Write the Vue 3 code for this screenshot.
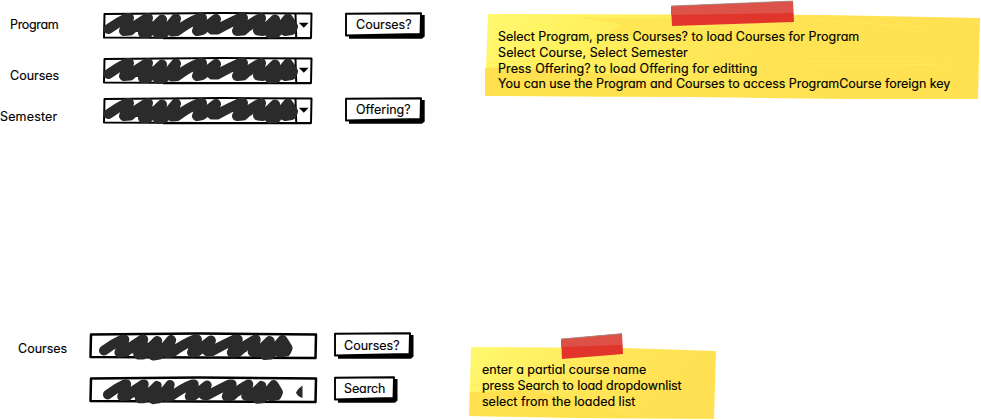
<script setup>
const selectors = [
  { label: 'Program', button: 'Courses?', key: 'program' },
  { label: 'Courses', button: '', key: 'course' },
  { label: 'Semester', button: 'Offering?', key: 'semester' },
]
const loadingNotes = [
  { text: 'Select Program, press Courses? to load Courses for Program', pace: 'even' },
  { text: 'Select Course, Select Semester', pace: 'loose' },
  { text: 'Press Offering? to load Offering for editting', pace: 'loose' },
  { text: 'You can use the Program and Courses to access ProgramCourse foreign key', pace: 'tight' },
]
const searchNotes = [
  { text: 'enter a partial course name', pace: 'even' },
  { text: 'press Search to load dropdownlist', pace: 'snug' },
  { text: 'select from the loaded list', pace: 'even' },
]
const scribble =
  'M5.5 17 Q15 10 24 6 L26 6 L21 19 L27 18.5 Q35 11 44 6 L45 6 L40 21 L45 21 L59 7.5 L55 22 L61 21 L73 6.5 L69 19.5 L74 19 Q86 10 97 6 L99 6 L94 19 L99 18 L113 7 L109 17.5 L114 17.5 Q126 11 137 6 L140 6 L134 19 L140 18.5 Q149 10 158 6 L155 18.5 L160 19 L172 7.5 L167 21.5 L173 21 L185 6.5 L182 19 L188.5 18 L190 14.5 L186 8 M43 18 L60 17 L72 17 M48 14 L58 15 L70 14 M25 12 L34 15 M158 15 L186 14 M97 12 L107 14 M137 12 L146 14'
</script>

<template>
  <main class="page">
    <section class="top">
      <div class="form">
        <div v-for="row in selectors" :key="row.key" class="row" :class="row.key">
          <label class="label">{{ row.label }}</label>
          <div class="combo">
            <svg class="art" viewBox="0 0 210 28">
              <path class="frame" d="M1.5 2 L120 1 L208.5 1.5 L208 26 L100 26 L1 25.5 Z" />
              <path class="base" d="M60 26.2 H208" />
              <path class="divider" d="M192.5 2 L193.2 25" />
              <path class="scribble" :d="scribble" />
              <path class="caret" d="M195.8 10.8 H205.6 L200.8 15.8 Z" />
            </svg>
          </div>
          <button v-if="row.button" class="button">
            <svg class="art" viewBox="0 0 80 27">
              <path class="shadow" d="M4 3 H79.7 V24.5 L77 26.7 H4 Z" />
              <path class="face" d="M1 1.7 L76 1.3 L75.5 22 L1 23.5 Z" />
            </svg>
            <span class="caption">{{ row.button }}</span>
          </button>
        </div>
      </div>
      <aside class="note large">
        <svg class="art" viewBox="0 0 496 100">
          <defs>
            <linearGradient id="paper-a" x1="0" y1="0" x2="1" y2="0.15">
              <stop offset="0" stop-color="#fff96f" />
              <stop offset="0.2" stop-color="#fff260" />
              <stop offset="0.42" stop-color="#ffea5a" />
              <stop offset="0.62" stop-color="#ffe353" />
              <stop offset="1" stop-color="#ffe152" />
            </linearGradient>
          </defs>
          <path fill="url(#paper-a)" d="M3 14 L340 15 L495 18 L493 99 L360 99 L210 97 L0 96 Z" />
          <path fill="#ffe14f" d="M0 68 L28 67 L60 70 L110 72 L150 79 L230 86 L240 97 L0 96 Z" />
          <path fill="#ffe452" d="M94 17 L187 19 L186 26 L330 34 L230 44 L120 34 L137 25 Z" opacity=".75" />
          <path class="grain" d="M4 63 L88 59 M277 62 L448 61 M330 66 L470 64 M310 19 L440 27" />
          <path fill="#e1352c" d="M186 6 L308 1 L309 22 L187 26 Z" />
          <path fill="#dd5249" d="M186 6 L308 1 L308 13 L186 15 Z" />
          <path class="tape-edge" d="M186 6 L308 1" />
        </svg>
        <p v-for="line in loadingNotes" :key="line.text" class="line" :class="line.pace">{{ line.text }}</p>
      </aside>
    </section>

    <section class="bottom">
      <div class="form">
        <div class="row query">
          <label class="label">Courses</label>
          <div class="field">
            <svg class="art" viewBox="0 0 229 29">
              <path class="frame thick" d="M2 2.5 L110 1.5 L227 2.5 L226.5 26 L110 25.5 L1.5 25 Z" />
              <path class="scribble" transform="translate(9.5 1.5) scale(.995 1)" :d="scribble" />
            </svg>
          </div>
          <button class="button">
            <svg class="art" viewBox="0 0 80 27">
              <path class="shadow" d="M4 3 H79.5 V24.5 L77 26.7 H4 Z" />
              <path class="face" d="M1 1.7 L76 1.3 L75.5 22 L1 23.5 Z" />
            </svg>
            <span class="caption">Courses?</span>
          </button>
        </div>
        <div class="row result">
          <label class="label"></label>
          <div class="field">
            <svg class="art" viewBox="0 0 229 29">
              <path class="frame thick" d="M2 2.5 L110 1.5 L227 2.5 L226.5 26 L110 25.5 L1.5 25 Z" />
              <path class="scribble" transform="translate(13.5 2.5) scale(.925 .95)" :d="scribble" />
              <path class="fragment" d="M213.5 9.5 V22 Q208 20 207 16.5 Q209 12.5 213.5 9.5 Z" />
            </svg>
          </div>
          <button class="button short">
            <svg class="art" viewBox="0 0 64 27">
              <path class="shadow" d="M4 3 H63.5 V24.5 L61 26.7 H4 Z" />
              <path class="face" d="M1 1.7 L60 1.3 L59.5 22 L1 23.5 Z" />
            </svg>
            <span class="caption">Search</span>
          </button>
        </div>
      </div>
      <aside class="note small">
        <svg class="art" viewBox="0 0 248 88">
          <defs>
            <linearGradient id="paper-b" x1="0" y1="0" x2="1" y2="0.3">
              <stop offset="0" stop-color="#fff970" />
              <stop offset="0.3" stop-color="#fff061" />
              <stop offset="0.6" stop-color="#ffe557" />
              <stop offset="1" stop-color="#ffe153" />
            </linearGradient>
          </defs>
          <path fill="url(#paper-b)" d="M2 15 L155 16 L247 19 L245 87 L105 86 L0 84 Z" />
          <path fill="#ffe14f" d="M1 60 L65 58 L104 68 L150 80 L158 86 L0 84 Z" />
          <path class="grain" d="M2 53 L65 50 M105 44 L190 45" />
          <path fill="#e1342b" d="M92 7 L153 1.5 L154 22 L93 27 Z" />
          <path fill="#dc5048" d="M92 7 L153 1.5 L153 13 L92 15 Z" />
          <path class="tape-edge" d="M92 7 L153 1.7" />
        </svg>
        <p v-for="line in searchNotes" :key="line.text" class="line" :class="line.pace">{{ line.text }}</p>
      </aside>
    </section>
  </main>
</template>

<style>
body {
  margin: 0;
  background: #fff;
}
</style>

<style scoped>
.page {
  box-sizing: border-box;
  width: 981px;
  height: 420px;
  overflow: hidden;
  display: flex;
  flex-direction: column;
  justify-content: space-between;
  background: #fff;
  color: #000;
  font: 12.5px/16px Inter, "Liberation Sans", sans-serif;
  font-feature-settings: "cv11";
  -webkit-text-stroke: .15px #000;
}
.top, .bottom { display: flex; align-items: flex-start; }
.bottom { height: 88px; }
.form { display: flex; flex-direction: column; flex: none; }
.top .form { width: 485px; padding-top: 12px; gap: 13px; }
.bottom .form { width: 469px; gap: 15px; }
.row { display: flex; align-items: flex-start; height: 28px; }
.row.course { height: 27px; margin-top: 4px; }
.bottom .row { height: 29px; }
.label { box-sizing: border-box; flex: none; width: 103px; padding: 5px 0 0 10px; letter-spacing: 0; }
.program .label { letter-spacing: -.35px; }
.course .label { padding-top: 11px; }
.semester .label { padding: 12px 0 0; letter-spacing: .15px; }
.bottom .label { width: 89px; padding: 9px 0 0 18px; }
.combo, .field, .button, .note { position: relative; flex: none; }
.combo { width: 210px; height: 28px; }
.field { width: 229px; height: 29px; }
.button {
  width: 80px;
  height: 27px;
  margin: 0 0 0 32px;
  padding: 0 0 2px 11px;
  border: 0;
  background: none;
  color: inherit;
  font: inherit;
  font-feature-settings: inherit;
  text-align: left;
}
.bottom .button { margin-left: 16px; padding: 0 0 0 10px; }
.bottom .button.short { width: 64px; padding-bottom: 2px; }
.short .caption { letter-spacing: -.1px; }
.caption { position: relative; white-space: nowrap; }
.art { position: absolute; inset: 0; width: 100%; height: 100%; overflow: visible; }
.frame, .divider { fill: none; stroke: #000; stroke-width: 2; stroke-linejoin: round; }
.base { stroke: #000; stroke-width: 2.2; }
.thick { stroke-width: 2.5; }
.scribble { fill: none; stroke: #2b2b2b; stroke-width: 10; stroke-linecap: round; stroke-linejoin: round; }
.caret, .shadow { fill: #000; }
.fragment { fill: #2b2b2b; }
.face { fill: #fff; stroke: #000; stroke-width: 1.9; stroke-linejoin: round; }
.grain { fill: none; stroke: #ffe95b; stroke-width: 1; }
.tape-edge { stroke: #9d9690; stroke-width: .8; }
.note { box-sizing: border-box; }
.large { width: 496px; height: 100px; padding: 29px 0 0 13px; }
.small { width: 248px; height: 88px; padding: 30px 0 0 13px; }
.line { position: relative; margin: 0; height: 16px; white-space: nowrap; }
.loose { letter-spacing: .11px; }
.tight { letter-spacing: -.045px; margin-top: -1px; }
.snug { letter-spacing: -.09px; }
</style>
